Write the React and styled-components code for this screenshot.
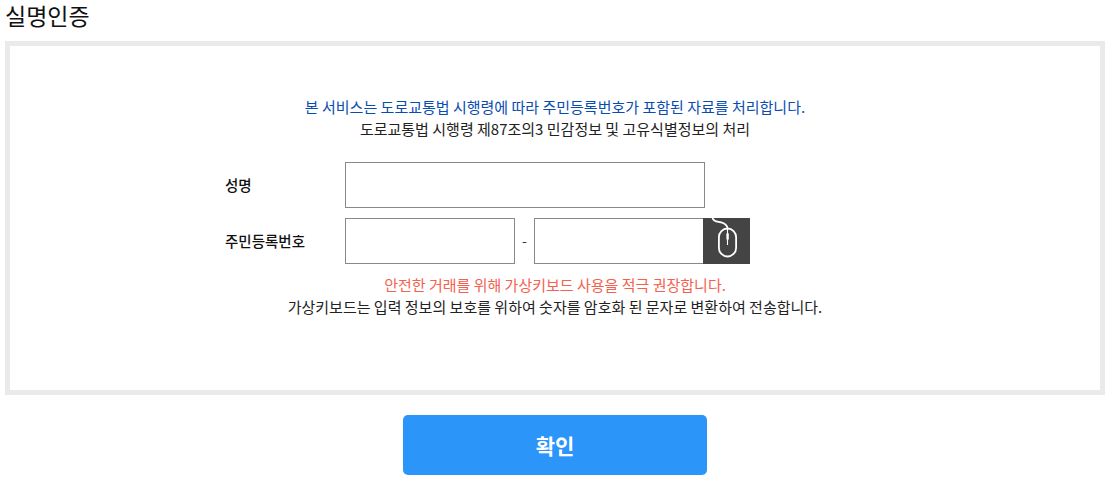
import styled, { createGlobalStyle } from "styled-components";

const GlobalStyle = createGlobalStyle`
  html, body {
    margin: 0;
    padding: 0;
    background: #fff;
  }
  body {
    font-family: "Noto Sans CJK KR", "Noto Sans", sans-serif;
    color: #222;
  }
  * {
    box-sizing: border-box;
  }
`;

const Page = styled.div`
  width: 1105px;
  padding-left: 5px;
`;

const Title = styled.h2`
  margin: 0;
  height: 41px;
  font-size: 23px;
  font-weight: 400;
  line-height: 30px;
  color: #111;
`;

const Panel = styled.div`
  height: 354px;
  border: 5px solid #eaeaea;
  padding-top: 50px;
  display: flex;
  flex-direction: column;
  align-items: center;
`;

const Notice = styled.p`
  margin: 0;
  font-size: 15px;
  line-height: 22px;
  text-align: center;
  color: ${(p) => p.color || "#222"};
`;

const Form = styled.form`
  width: 660px;
  margin: 22px 0 10px;
  display: flex;
  flex-direction: column;
  gap: 10px;
`;

const Row = styled.div`
  display: flex;
  align-items: center;
  height: 46px;
`;

const Label = styled.label`
  width: 120px;
  padding-bottom: 2px;
  font-size: 14.5px;
  font-weight: 500;
  color: #111;
`;

const Input = styled.input`
  width: ${(p) => p.$width}px;
  height: 46px;
  border: 1px solid #888;
  background: #fff;
  padding: 0 10px;
  outline: none;
`;

const Dash = styled.span`
  width: 19px;
  padding-bottom: 2px;
  text-align: center;
  font-size: 14px;
  color: #333;
`;

const MouseButton = styled.button`
  width: 47px;
  height: 46px;
  margin-left: -1px;
  border: none;
  padding: 0;
  background: #444;
  cursor: pointer;
  display: block;
`;

const Actions = styled.div`
  display: flex;
  justify-content: center;
  margin-top: 20px;
`;

const Submit = styled.button`
  width: 304px;
  height: 60px;
  border: none;
  border-radius: 5px;
  background: #2b95fa;
  color: #fff;
  font-family: inherit;
  font-size: 21px;
  font-weight: 700;
  cursor: pointer;
`;

const MouseIcon = () => (
  <svg width="47" height="46" viewBox="0 0 47 46" fill="none" stroke="#fff" strokeWidth="1.8">
    <path d="M9.5 0 C11 5 16 3 20 5 C23 6.5 24.5 7.5 24.5 10.5" />
    <rect x="15.9" y="10.5" width="17.2" height="28" rx="8.6" />
    <rect x="23.4" y="15" width="2.4" height="7" rx="1.2" fill="#fff" stroke="none" />
    <path d="M24.5 10.5 V15 M24.5 22 V27" strokeWidth="1.1" />
  </svg>
);

const App = () => {
  return (
    <Page>
      <GlobalStyle />
      <Title>실명인증</Title>
      <Panel>
        <Notice color="#0a4db0">본 서비스는 도로교통법 시행령에 따라 주민등록번호가 포함된 자료를 처리합니다.</Notice>
        <Notice>도로교통법 시행령 제87조의3 민감정보 및 고유식별정보의 처리</Notice>
        <Form>
          <Row>
            <Label>성명</Label>
            <Input $width={360} />
          </Row>
          <Row>
            <Label>주민등록번호</Label>
            <Input $width={170} />
            <Dash>-</Dash>
            <Input $width={170} type="password" />
            <MouseButton type="button">
              <MouseIcon />
            </MouseButton>
          </Row>
        </Form>
        <Notice color="#f4614f">안전한 거래를 위해 가상키보드 사용을 적극 권장합니다.</Notice>
        <Notice>가상키보드는 입력 정보의 보호를 위하여 숫자를 암호화 된 문자로 변환하여 전송합니다.</Notice>
      </Panel>
      <Actions>
        <Submit type="button">확인</Submit>
      </Actions>
    </Page>
  );
};

export default App;
